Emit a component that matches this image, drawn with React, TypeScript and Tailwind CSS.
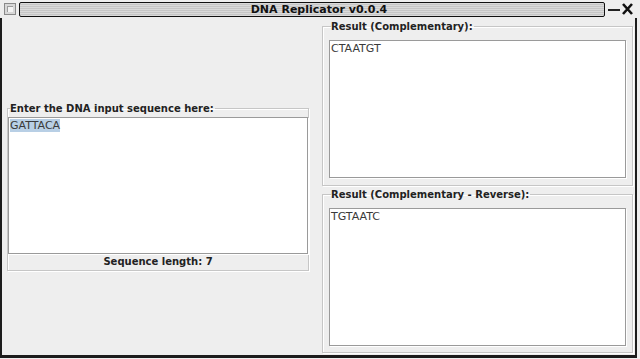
import React from "react";

const labelFont = { fontFamily: '"DejaVu Sans", "Liberation Sans", sans-serif' };

function Field({
  legend,
  children,
  className,
}: {
  legend: string;
  children: React.ReactNode;
  className?: string;
}) {
  return (
    <fieldset
      className={
        "border border-[#c6c6c6] shadow-[inset_1px_1px_0_#ffffff,1px_1px_0_#ffffff] " +
        (className ?? "")
      }
    >
      <legend className="ml-[2px] pr-[1px] text-[10px] leading-[13px] font-bold text-[#222]">
        {legend}
      </legend>
      {children}
    </fieldset>
  );
}

function TextBox({ text, selected, className }: { text: string; selected?: boolean; className?: string }) {
  return (
    <div
      className={
        "bg-white border border-[#9a9a9a] shadow-[1px_1px_0_#ffffff] px-[1px] pt-[1px] text-[11px] leading-[13px] text-[#3a3a3a] " +
        (className ?? "")
      }
    >
      {selected ? <span className="bg-[#b8cfe5]">{text}</span> : text}
    </div>
  );
}

export default function App() {
  return (
    <div className="w-[640px] h-[359px] bg-[#eeeeee] overflow-hidden" style={labelFont}>
      {/* title bar */}
      <div className="h-[18px] flex items-center">
        <div className="ml-[4px] w-[12px] h-[12px] border border-[#8a8a8a] bg-[#d8d8d8] p-[2px]">
          <div className="w-full h-full bg-[#f4f4f4] border-t border-l border-[#9c9c9c]" />
        </div>
        <div className="ml-[3px] w-[586px] h-[15px] border border-[#111] rounded-[2px] flex items-center justify-center bg-[repeating-linear-gradient(to_bottom,#dadada_0px,#dadada_1px,#c6c6c6_1px,#c6c6c6_2px)]">
          <span className="pl-[14px] text-[11px] leading-[13px] font-bold text-[#111]">
            DNA Replicator v0.0.4
          </span>
        </div>
        <svg width="14" height="12" viewBox="0 0 14 12" className="ml-[2px]">
          <rect x="1" y="6" width="12" height="2" fill="#222" />
        </svg>
        <svg width="13" height="12" viewBox="0 0 13 12">
          <path d="M2 1 L11 11 M11 1 L2 11" stroke="#111" strokeWidth="2.6" />
        </svg>
      </div>

      {/* window body */}
      <div className="w-[637px] h-[340px] border-l-2 border-r-2 border-b-[3px] border-[#1c1c1c] flex">
        <div className="w-[311px] flex items-center pl-[5px]">
          <Field legend="Enter the DNA input sequence here:" className="w-[302px] px-0 pb-[1px]">
            <TextBox text="GATTACA" selected className="mt-[2px] h-[137px]" />
            <div className="text-center text-[10px] leading-[14px] font-bold text-[#222] mt-[1px]">
              Sequence length: 7
            </div>
          </Field>
        </div>
        <div className="ml-[9px] w-[311px] flex flex-col pt-[2px] gap-[2px]">
          <Field legend="Result (Complementary):" className="h-[166px] px-[6px]">
            <TextBox text="CTAATGT" className="mt-[7px] h-[138px]" />
          </Field>
          <Field legend="Result (Complementary - Reverse):" className="h-[165px] px-[6px]">
            <TextBox text="TGTAATC" className="mt-[7px] h-[138px]" />
          </Field>
        </div>
      </div>
    </div>
  );
}
